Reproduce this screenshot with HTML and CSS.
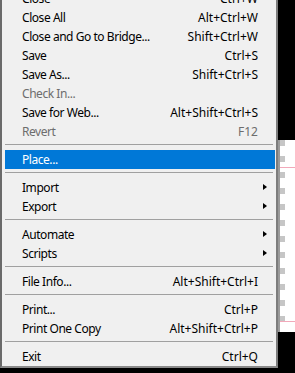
FILE: index.html
```html
<!DOCTYPE html>
<html lang="en">

<head>
    <meta charset="UTF-8" />
    <meta name="viewport" content="width=device-width, initial-scale=1.0" />
    <title>File Menu</title>
    <link rel="stylesheet" href="styles.css">
</head>

<body>
    <main class="screen">
        <div class="menu">
            <ul class="menu-list">
                <li class="item"><span class="label">Close</span><span class="key">Ctrl+W</span></li>
                <li class="item"><span class="label">Close All</span><span class="key">Alt+Ctrl+W</span></li>
                <li class="item"><span class="label">Close and Go to Bridge...</span><span class="key">Shift+Ctrl+W</span></li>
                <li class="item"><span class="label">Save</span><span class="key">Ctrl+S</span></li>
                <li class="item"><span class="label">Save As...</span><span class="key">Shift+Ctrl+S</span></li>
                <li class="item disabled"><span class="label">Check In...</span></li>
                <li class="item"><span class="label">Save for Web...</span><span class="key">Alt+Shift+Ctrl+S</span></li>
                <li class="item disabled"><span class="label">Revert</span><span class="key">F12</span></li>
                <li class="sep"></li>
                <li class="item active"><span class="label">Place...</span></li>
                <li class="sep"></li>
                <li class="item sub"><span class="label">Import</span><span class="arrow"></span></li>
                <li class="item sub"><span class="label">Export</span><span class="arrow"></span></li>
                <li class="sep"></li>
                <li class="item sub"><span class="label">Automate</span><span class="arrow"></span></li>
                <li class="item sub"><span class="label">Scripts</span><span class="arrow"></span></li>
                <li class="sep"></li>
                <li class="item"><span class="label">File Info...</span><span class="key">Alt+Shift+Ctrl+I</span></li>
                <li class="sep"></li>
                <li class="item"><span class="label">Print...</span><span class="key">Ctrl+P</span></li>
                <li class="item"><span class="label">Print One Copy</span><span class="key">Alt+Shift+Ctrl+P</span></li>
                <li class="sep"></li>
                <li class="item"><span class="label">Exit</span><span class="key">Ctrl+Q</span></li>
            </ul>
        </div>
        <div class="backdrop">
            <div class="canvas"></div>
        </div>
    </main>
</body>

</html>
```

FILE: styles.css
```css
* {
    box-sizing: border-box;
    margin: 0;
    padding: 0;
}

body {
    background: #000;
    overflow: hidden;
}

.screen {
    display: flex;
    align-items: flex-start;
    height: 373px;
}

.menu {
    width: 278px;
    flex-shrink: 0;
    background: #f0f0f0;
    border-left: 2px solid #6a6a6a;
    border-right: 2px solid #7c7c7c;
    border-bottom: 2px solid #8a8a8a;
    overflow: hidden;
    font-family: "Noto Sans", "Open Sans", sans-serif;
    font-size: 12px;
    color: #000;
}

.menu-list {
    list-style: none;
    margin-top: -11px;
}

.item {
    display: grid;
    grid-template-columns: 1fr auto 17px;
    align-items: center;
    height: 19px;
    line-height: 19px;
    margin: 0 1px 0 3px;
    padding-left: 17px;
    white-space: nowrap;
}

.item .label {
    letter-spacing: -0.45px;
}

.item .key {
    grid-column: 2;
    letter-spacing: 0;
}

.item .arrow {
    grid-column: 3;
    justify-self: start;
    margin: -2px 0 0 5px;
    width: 0;
    height: 0;
    border-top: 3.5px solid transparent;
    border-bottom: 3.5px solid transparent;
    border-left: 4px solid #000;
}

.item.disabled {
    color: #6d6d6d;
}

.item.active {
    background: #0078d7;
    color: #fff;
}

.sep {
    height: 1px;
    margin: 3px 3px 5px 3px;
    background: #a0a0a0;
}

.backdrop {
    flex: 1;
    padding-top: 140px;
}

.canvas {
    height: 192px;
    border-left: 2px solid #9a9a9a;
    background:
        linear-gradient(#f2a9ba, #f2a9ba) 0 27px / 100% 1px no-repeat,
        linear-gradient(#f2a9ba, #f2a9ba) 0 181px / 100% 1px no-repeat,
        repeating-linear-gradient(to bottom, #c6c6c6 0 6px, #fff 6px 16px) 0 0 / 5px 100% no-repeat,
        #fff;
}
```
